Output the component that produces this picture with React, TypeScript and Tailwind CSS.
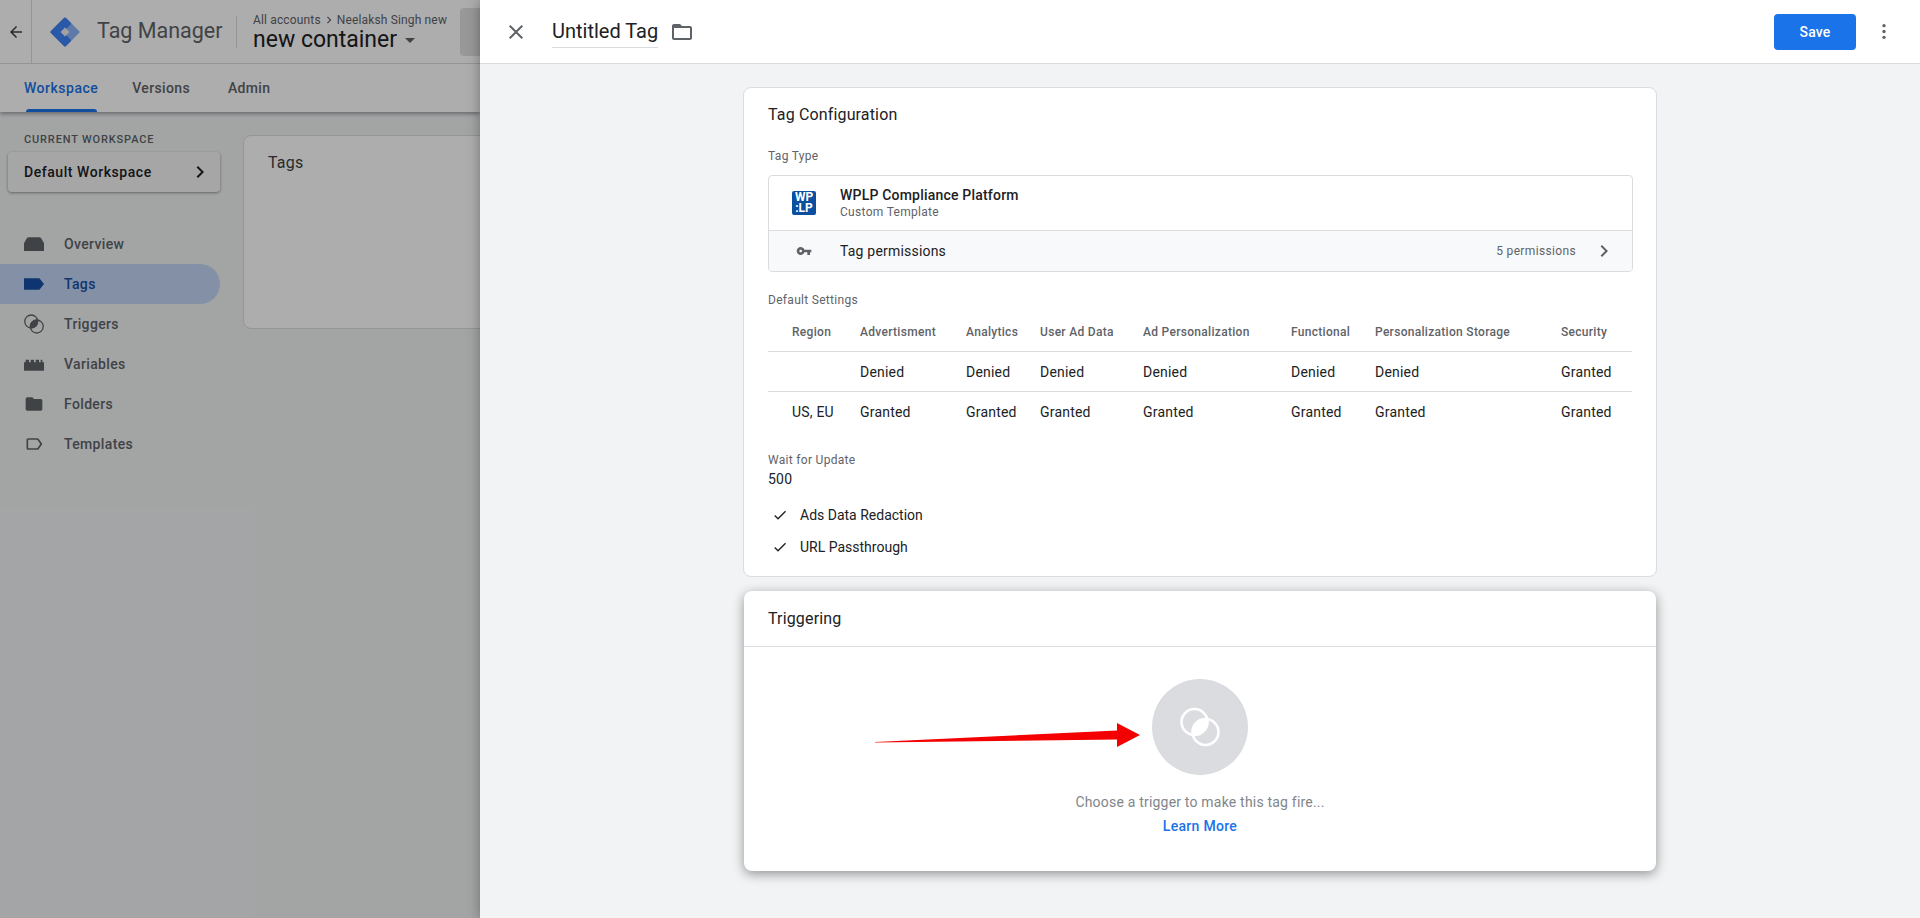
import type { ReactNode } from "react";

const navItems = ["Overview", "Tags", "Triggers", "Variables", "Folders", "Templates"];

const columns = ["Region", "Advertisment", "Analytics", "User Ad Data", "Ad Personalization", "Functional", "Personalization Storage", "Security"];
const rows = [
  ["", "Denied", "Denied", "Denied", "Denied", "Denied", "Denied", "Granted"],
  ["US, EU", "Granted", "Granted", "Granted", "Granted", "Granted", "Granted", "Granted"],
];

function MaterialIcon({ d, className }: { d: string; className?: string }) {
  return (
    <svg viewBox="0 0 24 24" fill="currentColor" className={className}>
      <path d={d} />
    </svg>
  );
}

const paths = {
  back: "M20 11H7.83l5.59-5.59L12 4l-8 8 8 8 1.41-1.41L7.83 13H20v-2z",
  close: "M19 6.41L17.59 5 12 10.59 6.41 5 5 6.41 10.59 12 5 17.59 6.41 19 12 13.41 17.59 19 19 17.59 13.41 12z",
  chevron: "M10 6L8.59 7.41 13.17 12l-4.58 4.59L10 18l6-6z",
  folderOutline: "M20 6h-8l-2-2H4c-1.1 0-2 .9-2 2v12c0 1.1.9 2 2 2h16c1.1 0 2-.9 2-2V8c0-1.1-.9-2-2-2zm0 12H4V8h16v10z",
  folder: "M10 4H4c-1.1 0-1.99.9-1.99 2L2 18c0 1.1.9 2 2 2h16c1.1 0 2-.9 2-2V8c0-1.1-.9-2-2-2h-8l-2-2z",
  key: "M12.65 10C11.83 7.67 9.61 6 7 6c-3.31 0-6 2.69-6 6s2.69 6 6 6c2.61 0 4.83-1.67 5.65-4H17v4h4v-4h2v-4H12.65zM7 14c-1.1 0-2-.9-2-2s.9-2 2-2 2 .9 2 2-.9 2-2 2z",
  check: "M9 16.17L4.83 12l-1.42 1.41L9 19 21 7l-1.41-1.41z",
  tag: "M0 5h18.5L24 12l-5.5 7H0z",
  labelOutline: "M17.63 5.84C17.27 5.33 16.67 5 16 5L5 5.01C3.9 5.01 3 5.9 3 7v10c0 1.1.9 1.99 2 1.99L16 19c.67 0 1.27-.33 1.63-.84L22 12l-4.37-6.16zM16 17H5V7h11l3.55 5L16 17z",
  overview: "M5.5 4h13c1 0 1.8.5 2.3 1.4L24 11v9.5H0V11l3.2-5.6C3.7 4.5 4.5 4 5.5 4z",
  variables: "M0 10h2V7h4v3h2V7h4v3h2V7h4v3h2V7h2v3h2v10H0z",
};

// two rings with the shared lens filled in
function TriggerGlyph({ className }: { className?: string }) {
  return (
    <svg viewBox="0 0 40 40" className={className} fill="none" stroke="currentColor" strokeWidth="2.6">
      <circle cx="14.5" cy="15" r="13" />
      <circle cx="25.5" cy="25" r="13" />
      <path d="M12.42 28.34A13.5 13.5 0 0 1 27.58 11.66A13.5 13.5 0 0 1 12.42 28.34z" fill="currentColor" stroke="none" />
    </svg>
  );
}

function NavIcon({ name, className }: { name: string; className?: string }) {
  if (name === "Overview") return <MaterialIcon d={paths.overview} className={className} />;
  if (name === "Tags") return <MaterialIcon d={paths.tag} className={className} />;
  if (name === "Variables") return <MaterialIcon d={paths.variables} className={className} />;
  if (name === "Folders") return <MaterialIcon d={paths.folder} className={className} />;
  if (name === "Templates") return <MaterialIcon d={paths.labelOutline} className={className} />;
  return <TriggerGlyph className={className} />;
}

function GtmLogo() {
  return (
    <svg viewBox="0 0 30 30" className="h-[30px] w-[30px]">
      <path d="M15 2 28 15 15 28 2 15z" fill="#8ab4f8" stroke="#8ab4f8" strokeWidth="3" strokeLinejoin="round" />
      <path d="M15 2 2 15 15 28 19.5 23.5 11 15 19.5 6.5z" fill="#3d84f5" stroke="#3d84f5" strokeWidth="3" strokeLinejoin="round" />
      <path d="M15 10.5 19.5 15 15 19.5 10.5 15z" fill="#eeeeee" />
    </svg>
  );
}

function SideTabs() {
  return (
    <div className="flex h-12 items-center gap-[34px] pl-6 text-sm font-medium tracking-[0.35px] text-[#5f6368]">
      <div className="relative flex h-12 items-center tracking-[0.5px] text-[#1a73e8]">
        Workspace
        <div className="absolute bottom-0 left-[2px] right-[1px] h-[3px] rounded-t-[3px] bg-[#1a73e8]" />
      </div>
      <div>Versions</div>
      <div className="ml-[4px]">Admin</div>
    </div>
  );
}

function BackgroundPage() {
  return (
    <div className="relative h-full w-[480px] shrink-0 overflow-hidden whitespace-nowrap bg-[#f1f3f4]">
      <div className="bg-white shadow-[0_2px_4px_rgba(0,0,0,0.35)]">
        <div className="flex h-[64px] items-center border-b border-[#dadce0]">
          <div className="flex h-full w-[32px] shrink-0 items-center justify-center border-r border-[#dadce0] text-[#3c4043]">
            <MaterialIcon d={paths.back} className="h-[18px] w-[18px]" />
          </div>
          <div className="ml-[18px] shrink-0">
            <GtmLogo />
          </div>
          <div className="ml-[17px] w-[124px] shrink-0 text-[21.5px] tracking-normal text-[#5f6368]">Tag Manager</div>
          <div className="ml-[15px] h-[32px] w-px shrink-0 bg-[#dadce0]" />
          <div className="ml-[16px] w-[207px] shrink-0">
            <div className="flex items-center text-xs leading-4 tracking-[0.15px] text-[#5f6368]">
              All accounts
              <MaterialIcon d={paths.chevron} className="mx-[1px] h-[14px] w-[14px]" />
              Neelaksh Singh new
            </div>
            <div className="flex items-center text-[23px] leading-6 tracking-normal text-[#202124]">
              new container
              <span className="ml-2 mt-[2px] h-0 w-0 border-x-[5px] border-t-[5px] border-x-transparent border-t-[#5f6368]" />
            </div>
          </div>
          <div className="h-[48px] w-[40px] shrink-0 rounded-[4px] bg-[#e0e0e0]" />
        </div>
        <SideTabs />
      </div>

      <div className="flex">
        <div className="w-[220px] shrink-0">
          <div className="mt-[20px] pl-6 text-[11px] font-medium leading-4 tracking-[0.85px] text-[#5f6368]">CURRENT WORKSPACE</div>
          <div className="ml-2 mt-[4px] flex h-10 w-[212px] items-center justify-between rounded-[4px] bg-[#f5f5f5] pl-4 pr-2 text-sm font-medium tracking-[0.55px] text-[#202124] shadow-[0_1px_3px_rgba(0,0,0,0.4)]">
            Default Workspace
            <MaterialIcon d={paths.chevron} className="h-6 w-6" />
          </div>
          <div className="mt-[32px]">
            {navItems.map((item) => (
              <div
                key={item}
                className={
                  item === "Tags"
                    ? "flex h-10 items-center rounded-r-[20px] bg-[#c2d5f3] pl-6 text-sm font-medium tracking-[0.35px] text-[#174ea6]"
                    : "flex h-10 items-center pl-6 text-sm font-medium tracking-[0.35px] text-[#5f6368]"
                }
              >
                <NavIcon name={item} className="h-5 w-5" />
                <span className="ml-5">{item}</span>
              </div>
            ))}
          </div>
        </div>
        <div className="ml-[23px] mt-[23px] h-[194px] w-[400px] shrink-0 rounded-lg border border-[#dadce0] bg-white pl-6 pt-[15px] text-base text-[#3c4043]">
          Tags
        </div>
      </div>

      <div className="absolute inset-0 bg-black/[0.32]" />
    </div>
  );
}

function Card({ children, raised }: { children: ReactNode; raised?: boolean }) {
  return (
    <div
      className={
        raised
          ? "w-[912px] rounded-lg bg-white shadow-[0_3px_12px_rgba(0,0,0,0.4)]"
          : "w-[914px] rounded-lg border border-[#dadce0] bg-white"
      }
    >
      {children}
    </div>
  );
}

function WplpLogo() {
  return (
    <div className="flex h-6 w-6 flex-col items-center justify-center rounded-[2px] bg-[#0b4f9e] font-bold tracking-normal text-white">
      <span className="text-[12px] leading-[11px]">WP</span>
      <span className="text-[12px] leading-[11px]">:LP</span>
    </div>
  );
}

const gridCols = "grid-cols-[92px_106px_74px_103px_148px_84px_186px_71px]";

function TagConfiguration() {
  return (
    <Card>
      <div className="h-[488px] px-6 pt-[17px]">
        <div className="text-base leading-5 tracking-[0.15px] text-[#202124]">Tag Configuration</div>
        <div className="mt-[23px] text-xs leading-4 tracking-[0.3px] text-[#5f6368]">Tag Type</div>
        <div className="mt-[11px] w-[865px] overflow-hidden rounded-[4px] border border-[#dadce0]">
          <div className="flex h-[55px] items-center border-b border-[#dadce0] pl-[23px]">
            <WplpLogo />
            <div className="ml-6">
              <div className="text-sm font-medium leading-[18px] text-[#202124]">WPLP Compliance Platform</div>
              <div className="text-xs leading-4 tracking-[0.3px] text-[#5f6368]">Custom Template</div>
            </div>
          </div>
          <div className="flex h-[40px] items-center bg-[#f8f9fa] pl-[27px] pr-[16px]">
            <MaterialIcon d={paths.key} className="h-4 w-4 text-[#5f6368]" />
            <div className="ml-7 text-sm text-[#202124]">Tag permissions</div>
            <div className="ml-auto text-xs tracking-[0.35px] text-[#5f6368]">5 permissions</div>
            <MaterialIcon d={paths.chevron} className="ml-[16px] h-6 w-6 text-[#5f6368]" />
          </div>
        </div>

        <div className="mt-[20px] text-xs leading-4 tracking-[0.3px] text-[#5f6368]">Default Settings</div>
        <div className="mt-[6px] w-[864px]">
          <div className={`grid h-[38px] ${gridCols} items-center border-b border-[#dadce0] pb-[2px] text-xs font-medium tracking-[0.3px] text-[#5f6368]`}>
            {columns.map((col, i) => (
              <div key={col} className={i === 0 ? "whitespace-nowrap pl-6" : "whitespace-nowrap"}>
                {col}
              </div>
            ))}
          </div>
          {rows.map((row, r) => (
            <div
              key={r}
              className={
                r === 0
                  ? `grid h-[40px] ${gridCols} items-center border-b border-[#dadce0] text-sm text-[#202124]`
                  : `grid h-[40px] ${gridCols} items-center text-sm text-[#202124]`
              }
            >
              {row.map((cell, i) => (
                <div key={i} className={i === 0 ? "whitespace-nowrap pl-6" : "whitespace-nowrap"}>
                  {cell}
                </div>
              ))}
            </div>
          ))}
        </div>

        <div className="mt-[20px] text-xs leading-4 tracking-[0.3px] text-[#5f6368]">Wait for Update</div>
        <div className="mt-[1px] text-sm leading-5 text-[#202124]">500</div>
        <div className="mt-[10px] flex h-8 items-center text-sm tracking-normal text-[#202124]">
          <MaterialIcon d={paths.check} className="ml-[4px] h-4 w-4" />
          <span className="ml-3">Ads Data Redaction</span>
        </div>
        <div className="flex h-8 items-center text-sm tracking-normal text-[#202124]">
          <MaterialIcon d={paths.check} className="ml-[4px] h-4 w-4" />
          <span className="ml-3">URL Passthrough</span>
        </div>
      </div>
    </Card>
  );
}

function Triggering() {
  return (
    <Card raised>
      <div className="flex h-[56px] items-center border-b border-[#dadce0] pl-6 text-base tracking-[0.15px] text-[#202124]">Triggering</div>
      <div className="relative flex h-[224px] flex-col items-center pt-[32px]">
        <div className="flex h-24 w-24 items-center justify-center rounded-full bg-[#dadce0] text-white">
          <TriggerGlyph className="h-10 w-10" />
        </div>
        <div className="mt-[17px] text-sm leading-5 text-[#80868b]">Choose a trigger to make this tag fire...</div>
        <div className="mt-[4px] text-sm font-medium leading-5 tracking-[0.3px] text-[#1a73e8]">Learn More</div>
        {/* annotation arrow drawn over the screenshot */}
        <svg viewBox="0 0 270 30" className="absolute left-[129px] top-[75px] h-[30px] w-[270px]">
          <path d="M2 20 244 8.5 244 1 267 13 244 25 244 17.5 2 20.5z" fill="#f40000" />
        </svg>
      </div>
    </Card>
  );
}

export default function App() {
  return (
    <div className="flex h-[918px] w-[1920px] overflow-hidden bg-[#f1f3f4] font-['Roboto',sans-serif] tracking-[0.2px]">
      <BackgroundPage />
      <div className="relative h-full w-[1440px] shrink-0 bg-[#f1f3f4] shadow-[0_0_12px_rgba(0,0,0,0.35)]">
        <div className="flex h-[64px] items-center border-b border-[#dadce0] bg-white pl-6 pr-6">
          <MaterialIcon d={paths.close} className="h-6 w-6 text-[#5f6368]" />
          <div className="ml-[24px] border-b border-[#dadce0] pb-[3px] pt-[3px] text-xl leading-[26px] tracking-normal text-[#202124]">Untitled Tag</div>
          <MaterialIcon d={paths.folderOutline} className="ml-[12px] h-6 w-6 text-[#5f6368]" />
          <div className="ml-auto flex h-9 w-[82px] items-center justify-center rounded-[4px] bg-[#1a73e8] text-sm font-medium text-white">Save</div>
          <svg viewBox="0 0 4 18" className="ml-[26px] mr-[10px] h-[15px] w-[4px] fill-[#5f6368]">
            <circle cx="2" cy="2" r="2" />
            <circle cx="2" cy="9" r="2" />
            <circle cx="2" cy="16" r="2" />
          </svg>
        </div>
        <div className="flex flex-col items-center gap-[14px] pt-[23px]">
          <TagConfiguration />
          <Triggering />
        </div>
      </div>
    </div>
  );
}
